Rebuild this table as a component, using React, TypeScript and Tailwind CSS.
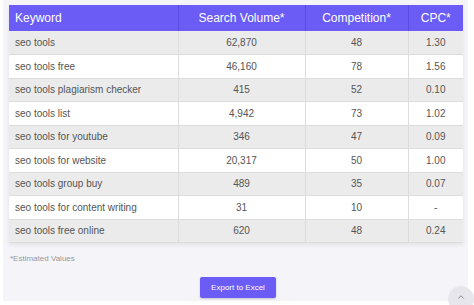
import { ChevronUp } from "lucide-react";

const rows = [
  { kw: "seo tools", vol: "62,870", comp: "48", cpc: "1.30" },
  { kw: "seo tools free", vol: "46,160", comp: "78", cpc: "1.56" },
  { kw: "seo tools plagiarism checker", vol: "415", comp: "52", cpc: "0.10" },
  { kw: "seo tools list", vol: "4,942", comp: "73", cpc: "1.02" },
  { kw: "seo tools for youtube", vol: "346", comp: "47", cpc: "0.09" },
  { kw: "seo tools for website", vol: "20,317", comp: "50", cpc: "1.00" },
  { kw: "seo tools group buy", vol: "489", comp: "35", cpc: "0.07" },
  { kw: "seo tools for content writing", vol: "31", comp: "10", cpc: "-" },
  { kw: "seo tools free online", vol: "620", comp: "48", cpc: "0.24" },
];

export default function App() {
  return (
    <div
      className="relative w-[474px] h-[305px] overflow-hidden bg-white"
      style={{ fontFamily: '"Liberation Sans", Arial, sans-serif' }}
    >
      <div className="ml-[3px] w-[465px] h-[301px] bg-[#f4f4f9] pt-[5px] px-[6px]">
        {/* keyword table */}
        <table className="w-[454px] border-collapse table-fixed shadow-[0_2px_4px_rgba(0,0,0,0.08)]">
          <colgroup>
            <col className="w-[169px]" />
            <col className="w-[127px]" />
            <col className="w-[103px]" />
            <col className="w-[55px]" />
          </colgroup>
          <thead>
            <tr className="h-[26px] bg-[#6b5cf6] text-white text-[12px]">
              <th className="text-left font-normal pl-[6px] border-r border-[#5a4ce0]">Keyword</th>
              <th className="text-center font-normal border-r border-[#5a4ce0]">Search Volume*</th>
              <th className="text-center font-normal border-r border-[#5a4ce0]">Competition*</th>
              <th className="text-center font-normal">CPC*</th>
            </tr>
          </thead>
          <tbody className="text-[10px] text-[#555]">
            {rows.map((r, i) => (
              <tr
                key={r.kw}
                className={`h-[23.5px] border-b border-[#dcdcdc] ${i % 2 === 0 ? "bg-[#ebebeb]" : "bg-white"}`}
              >
                <td className="pl-[6px] border-r border-[#dcdcdc]">{r.kw}</td>
                <td className="text-center border-r border-[#dcdcdc]">{r.vol}</td>
                <td className="text-center border-r border-[#dcdcdc]">{r.comp}</td>
                <td className="text-center">{r.cpc}</td>
              </tr>
            ))}
          </tbody>
        </table>

        <p className="mt-[10px] ml-[1px] text-[8px] text-[#999]">*Estimated Values</p>

        <div className="flex justify-center mt-[12px] pl-[5px]">
          <button className="w-[76px] h-[21px] bg-[#6b5cf6] text-white text-[8px] rounded-[2px] shadow-[0_1px_2px_rgba(0,0,0,0.2)]">
            Export to Excel
          </button>
        </div>
      </div>

      {/* scroll to top */}
      <div className="absolute left-[448px] top-[286px] w-[26px] h-[26px] rounded-full bg-[#e6e6ec] flex justify-center pt-[6px]">
        <ChevronUp size={10} strokeWidth={2} className="text-[#777]" />
      </div>
    </div>
  );
}
